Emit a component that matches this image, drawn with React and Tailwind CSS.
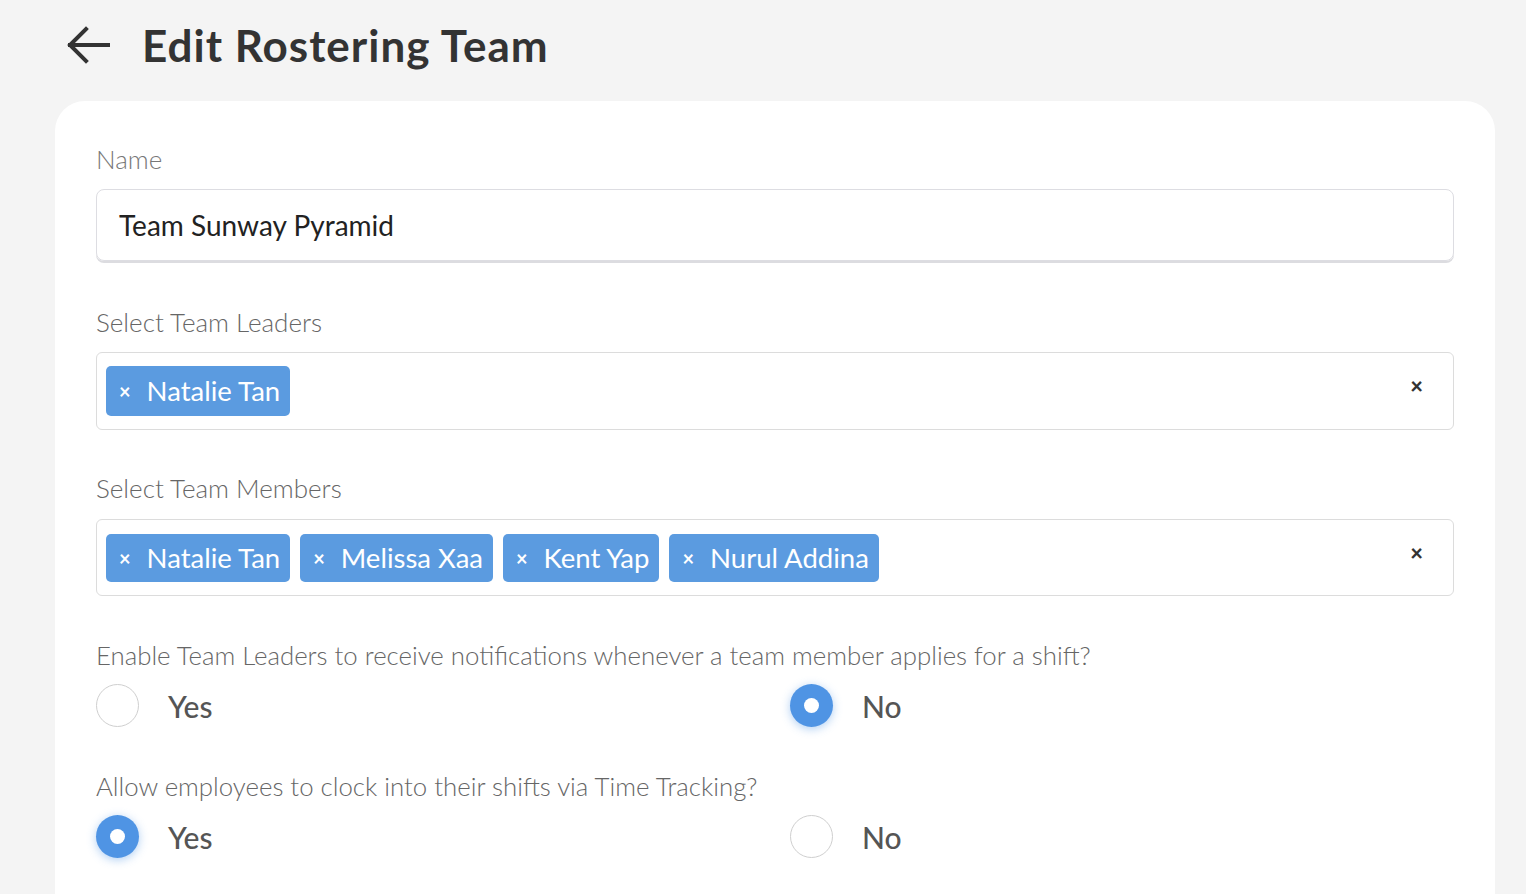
import React from "react";

const font = { fontFamily: "Lato, 'Open Sans', sans-serif" };

function Tag({ label, tall }) {
  return (
    <div
      className={`flex items-center ${tall ? "h-[50px]" : "h-[48px]"} pl-[13px] pr-[10px] gap-[16px] rounded-[5px] bg-[#5b9be0] text-white`}
    >
      <span className="text-[20px] font-bold leading-none">×</span>
      <span className="text-[27.5px] leading-none">{label}</span>
    </div>
  );
}

function MultiSelect({ items, tall }) {
  return (
    <div
      className={`flex items-center ${tall ? "h-[78px]" : "h-[77px]"} pl-[9px] pr-[30px] border border-[#dcdcdc] rounded-[6px] bg-white`}
    >
      <div className="flex flex-1 gap-[10px]">
        {items.map((n) => (
          <Tag key={n} label={n} tall={tall} />
        ))}
      </div>
      <span className="text-[22px] font-black text-[#333] leading-none mb-[10px]">×</span>
    </div>
  );
}

function Radio({ checked, label }) {
  return (
    <div className="flex items-center gap-[29px]">
      {checked ? (
        <div className="w-[43px] h-[43px] rounded-full bg-[#4f94e4] flex items-center justify-center shadow-[0_2px_10px_rgba(79,148,228,0.45)]">
          <div className="w-[15px] h-[15px] rounded-full bg-white" />
        </div>
      ) : (
        <div className="w-[43px] h-[43px] rounded-full border border-[#cfcfcf] bg-white" />
      )}
      <span className="text-[30px] leading-none text-[#555] font-medium">{label}</span>
    </div>
  );
}

function Question({ text, value }) {
  return (
    <div className="mt-[44px]">
      <div className="text-[25.8px] leading-[30px] text-[#666] font-light">{text}</div>
      <div className="grid grid-cols-[694px_1fr] mt-[14px]">
        <Radio checked={value === "yes"} label="Yes" />
        <Radio checked={value === "no"} label="No" />
      </div>
    </div>
  );
}

export default function App() {
  return (
    <div className="h-[894px] overflow-hidden bg-[#f4f4f4]" style={font}>
      <div className="flex items-center h-[101px] pl-[66px] pb-[12px]">
        <svg width="44" height="40" viewBox="0 0 44 40" fill="none" stroke="#333" strokeWidth="4" strokeLinecap="square">
          <path d="M42 20H4" />
          <path d="M20 4L4 20L20 36" />
        </svg>
        <h1 className="ml-[32px] text-[44px] leading-none font-bold text-[#333] tracking-[1px]">Edit Rostering Team</h1>
      </div>
      <div className="ml-[55px] mr-[31px] bg-white rounded-t-[30px] pt-[43px] px-[41px] h-[800px]">
        <div className="text-[26px] leading-[30px] text-[#777] font-light">Name</div>
        <div className="mt-[15px] h-[72px] flex items-center px-[22px] border border-[#dddde2] rounded-[8px] shadow-[0_2px_0_#dcdce0]">
          <span className="text-[28px] text-[#222]">Team Sunway Pyramid</span>
        </div>

        <div className="mt-[46px] text-[26px] leading-[30px] text-[#666] font-light">Select Team Leaders</div>
        <div className="mt-[15px]">
          <MultiSelect items={["Natalie Tan"]} tall />
        </div>

        <div className="mt-[43px] text-[26px] leading-[30px] text-[#666] font-light">Select Team Members</div>
        <div className="mt-[16px]">
          <MultiSelect items={["Natalie Tan", "Melissa Xaa", "Kent Yap", "Nurul Addina"]} />
        </div>

        <Question text="Enable Team Leaders to receive notifications whenever a team member applies for a shift?" value="no" />
        <Question text="Allow employees to clock into their shifts via Time Tracking?" value="yes" />
      </div>
    </div>
  );
}
